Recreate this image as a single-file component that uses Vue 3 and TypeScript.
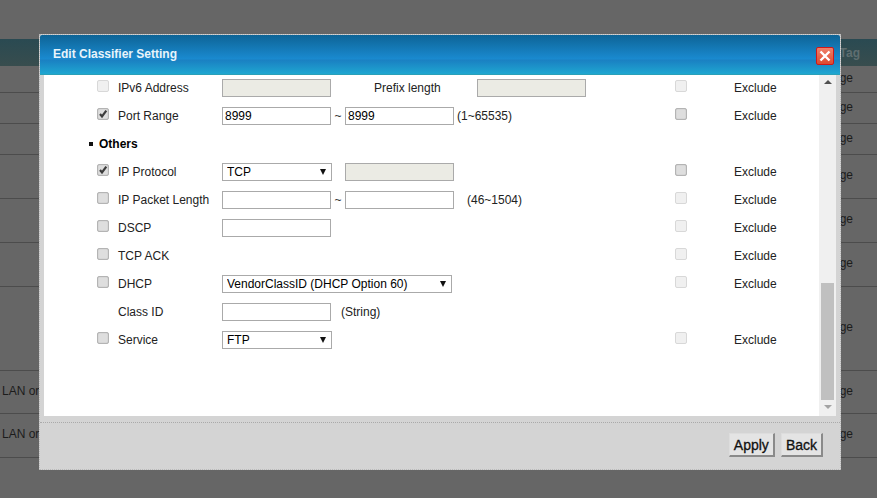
<script setup lang="ts">
interface Row {
  label: string
  checked?: boolean
  check?: boolean
  kind: 'v6' | 'range' | 'proto' | 'len' | 'text' | 'none' | 'dhcp' | 'classid' | 'service'
  exclude?: 'on' | 'off'
}
const rows: Row[] = [
  { label: 'IPv6 Address', check: true, kind: 'v6', exclude: 'off' },
  { label: 'Port Range', check: true, checked: true, kind: 'range', exclude: 'on' },
  { label: 'IP Protocol', check: true, checked: true, kind: 'proto', exclude: 'on' },
  { label: 'IP Packet Length', check: true, kind: 'len', exclude: 'off' },
  { label: 'DSCP', check: true, kind: 'text', exclude: 'off' },
  { label: 'TCP ACK', check: true, kind: 'none', exclude: 'off' },
  { label: 'DHCP', check: true, kind: 'dhcp', exclude: 'off' },
  { label: 'Class ID', kind: 'classid' },
  { label: 'Service', check: true, kind: 'service', exclude: 'off' },
]
const first = rows.slice(0, 2)
const second = rows.slice(2)
const bgRows = [
  { h: 27, t: '' }, { h: 31, t: '' }, { h: 31, t: '' }, { h: 44, t: '' }, { h: 44, t: '' }, { h: 44, t: '' },
  { h: 84, t: '' }, { h: 43, t: 'LAN or' }, { h: 44, t: 'LAN or' },
]
</script>

<template>
  <div class="page">
    <div class="bg-head"><span class="bg-tag">Tag</span></div>
    <div v-for="(r, i) in bgRows" :key="i" class="bg-row" :style="{ height: r.h + 'px' }">
      <span class="bg-left">{{ r.t }}</span>
      <span class="bg-right">ge</span>
    </div>

    <section class="dialog">
      <header class="title">
        <span>Edit Classifier Setting</span>
        <button class="close" aria-label="Close">
          <svg width="14" height="14" viewBox="0 0 14 14"><path d="M2.5 2.5 11.5 11.5M11.5 2.5 2.5 11.5" stroke="#fff" stroke-width="2.4" fill="none" /></svg>
        </button>
      </header>
      <div class="body">
        <div class="list">
          <template v-for="group in [first, second]" :key="group[0].label">
            <div v-if="group === second" class="section"><i class="bullet"></i>Others</div>
            <div v-for="r in group" :key="r.label" class="row">
              <span class="c-check">
                <span v-if="r.check" class="cb" :class="{ faded: r.label === 'IPv6 Address' }">
                  <svg v-if="r.checked" width="12" height="12" viewBox="0 0 12 12"><path d="M3 6 5 8.4 9.3 2.6" stroke="#3c3c3c" stroke-width="2.2" fill="none" /></svg>
                </span>
              </span>
              <span class="c-label">{{ r.label }}</span>
              <span class="c-field">
                <template v-if="r.kind === 'v6'">
                  <input class="ipt dis" disabled />
                  <span class="prefix">Prefix length</span>
                  <input class="ipt dis" disabled />
                </template>
                <template v-else-if="r.kind === 'range'">
                  <input class="ipt" value="8999" /><span class="tilde">~</span><input class="ipt" value="8999" />
                  <span class="hint-a">(1~65535)</span>
                </template>
                <template v-else-if="r.kind === 'proto'">
                  <span class="sel w-s"><select><option>TCP</option></select><i class="arrow"></i></span>
                  <input class="ipt dis gap-proto" disabled />
                </template>
                <template v-else-if="r.kind === 'len'">
                  <input class="ipt" /><span class="tilde">~</span><input class="ipt" />
                  <span class="hint-b">(46~1504)</span>
                </template>
                <input v-else-if="r.kind === 'text'" class="ipt" />
                <span v-else-if="r.kind === 'dhcp'" class="sel w-l"><select><option>VendorClassID (DHCP Option 60)</option></select><i class="arrow"></i></span>
                <template v-else-if="r.kind === 'classid'">
                  <input class="ipt" /><span class="hint-c">(String)</span>
                </template>
                <span v-else-if="r.kind === 'service'" class="sel w-s"><select><option>FTP</option></select><i class="arrow"></i></span>
              </span>
              <span class="c-excl-box">
                <span v-if="r.exclude" class="cb" :class="{ faded: r.exclude === 'off' }"></span>
              </span>
              <span v-if="r.exclude" class="c-excl">Exclude</span>
            </div>
          </template>
        </div>
        <div class="scroll">
          <i class="sc-up"></i>
          <div class="sc-track"><div class="sc-thumb"></div></div>
          <i class="sc-down"></i>
        </div>
      </div>
      <footer class="foot">
        <button class="btn">Apply</button>
        <button class="btn">Back</button>
      </footer>
    </section>
  </div>
</template>

<style>
html, body { margin: 0; background: #666; }
</style>

<style scoped>
.page {
  position: relative;
  width: 877px;
  height: 498px;
  overflow: hidden;
  background: #666;
  padding-top: 39px;
  box-sizing: border-box;
  font: 12px "Liberation Sans", Arial, sans-serif;
  color: #000;
}
.bg-head {
  height: 27px;
  background: linear-gradient(#2a4a52, #384d4e);
  display: flex;
  justify-content: flex-end;
  align-items: center;
  padding-right: 17px;
}
.bg-tag { font-weight: 700; color: #5f6e70; }
.bg-row {
  display: flex;
  justify-content: space-between;
  align-items: center;
  border-bottom: 1px solid #4c4c4c;
  box-sizing: border-box;
  padding: 0 24px 3px 2px;
  color: #1c1c1c;
}
.dialog {
  position: absolute;
  left: 39px;
  top: 34px;
  width: 802px;
  height: 436px;
  box-sizing: border-box;
  border: 1px dotted #bbb;
  background: #d4d4d4;
  display: flex;
  flex-direction: column;
}
.title {
  height: 40px;
  flex: none;
  box-sizing: border-box;
  position: relative;
  padding: 12px 13px 0;
  font-size: 12px;
  font-weight: 700;
  color: #e8f4fb;
  border-radius: 2px 2px 0 0;
  background: linear-gradient(#0e6496 0, #1a8ad0 24px, #1a80c2 25px, #1fa9d2 40px);
  box-shadow: inset 0 -1px 0 #2aa0b8;
}
.close {
  position: absolute;
  right: 6px;
  top: 12px;
  width: 18px;
  height: 18px;
  padding: 0;
  border: 1px solid #d01818;
  border-radius: 2px;
  background: linear-gradient(#f0806a, #dd4a30);
  display: flex;
  align-items: center;
  justify-content: center;
}
.body {
  flex: none;
  height: 341px;
  margin: 0 4px;
  display: flex;
  background: #fff;
}
.list { flex: 1; overflow: hidden; margin-top: -1px; }
.row, .section { height: 28px; display: flex; align-items: center; }
.section { font-weight: 700; padding-left: 45px; }
.bullet { width: 4px; height: 4px; background: #111; margin-right: 6px; }
.c-check { width: 74px; padding-left: 53px; box-sizing: border-box; flex: none; display: flex; align-items: center; }
.cb {
  display: block;
  box-sizing: border-box;
  width: 12px;
  height: 12px;
  border: 1px solid #b4b4b4;
  border-radius: 2px;
  background: #dedede;
  margin-bottom: 4px;
  box-shadow: inset 0 0 1px #999;
}
.cb.faded { background: #f0f0f0; border-color: #d8d8d8; box-shadow: none; }
.cb svg { display: block; margin: -1px 0 0 -1px; }
.c-label { width: 104px; flex: none; color: #222; }
.c-field { width: 453px; flex: none; display: flex; align-items: center; }
.ipt {
  width: 109px;
  height: 18px;
  box-sizing: border-box;
  border: 1px solid #aaa;
  padding: 0 2px;
  font: 12px "Liberation Sans", Arial, sans-serif;
  color: #000;
  background: #fff;
  outline: none;
}
.dis { background: #ebebe4; }
.tilde { width: 14px; text-align: center; color: #333; }
.prefix { width: 146px; padding-left: 43px; box-sizing: border-box; color: #222; }
.gap-proto { margin-left: 13px; }
.hint-a { margin-left: 3px; color: #222; }
.hint-b { margin-left: 13px; color: #222; }
.hint-c { margin-left: 10px; color: #222; }
.sel { position: relative; display: block; height: 18px; }
.w-s { width: 110px; }
.w-l { width: 230px; }
.sel select {
  appearance: none;
  width: 100%;
  height: 100%;
  box-sizing: border-box;
  border: 1px solid #aaa;
  background: #fff;
  border-radius: 0;
  padding: 0 0 0 4px;
  font: 12px "Liberation Sans", Arial, sans-serif;
  color: #000;
  outline: none;
}
.arrow {
  position: absolute;
  right: 6px;
  top: 6px;
  width: 0;
  height: 0;
  border-left: 3px solid transparent;
  border-right: 3px solid transparent;
  border-top: 6px solid #111;
  pointer-events: none;
}
.c-excl-box { width: 59px; flex: none; display: flex; align-items: center; }
.c-excl { color: #222; }
.scroll {
  width: 17px;
  flex: none;
  background: #f0f0f0;
  display: flex;
  flex-direction: column;
  align-items: center;
}
.sc-up, .sc-down { width: 0; height: 0; flex: none; border-left: 4px solid transparent; border-right: 4px solid transparent; }
.sc-up { border-bottom: 4px solid #505050; margin: 5px 0 5px; }
.sc-down { border-top: 4px solid #a3a3a3; margin: 5px 0 7px; }
.sc-track { flex: 1; width: 100%; display: flex; flex-direction: column; justify-content: flex-end; }
.sc-thumb { height: 117px; margin: 0 2px 0 2px; background: #c0c0c0; }
.foot {
  flex: 1;
  margin-top: 6px;
  border-top: 1px dotted #aaa;
  display: flex;
  justify-content: flex-end;
  align-items: flex-start;
  gap: 6px;
  padding: 10px 17px 0 0;
}
.btn {
  height: 24px;
  box-sizing: border-box;
  padding: 0 4px;
  border-style: solid;
  border-width: 1px 2px 2px 1px;
  border-color: #ddd #8a8a8a #8a8a8a #ddd;
  background: #e4e4e4;
  font: 14px "Liberation Sans", Arial, sans-serif;
  -webkit-text-stroke: 0.3px #111;
  color: #111;
}
</style>
